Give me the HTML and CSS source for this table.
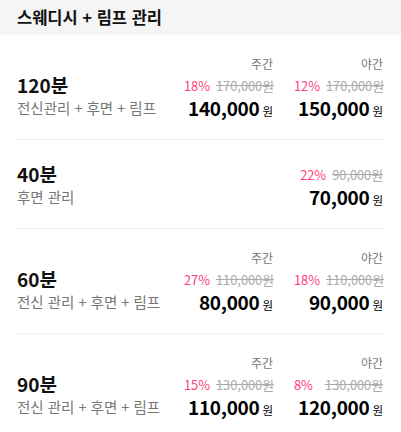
FILE: index.html
```html
<!DOCTYPE html>
<html lang="ko">
<head>
    <meta charset="UTF-8">
    <meta name="viewport" content="width=device-width, initial-scale=1.0">
    <title>스웨디시 + 림프 관리</title>
    <link rel="stylesheet" href="styles.css">
</head>
<body>
    <div class="menu">
        <h2 class="menu-title">스웨디시 + 림프 관리</h2>

        <div class="course">
            <div class="course-info">
                <div class="course-time">120분</div>
                <div class="course-desc">전신관리 + 후면 + 림프</div>
            </div>
            <div class="prices">
                <div class="price-col">
                    <div class="price-label">주간</div>
                    <div class="price-discount"><span class="rate">18%</span><span class="origin">170,000원</span></div>
                    <div class="price-final">140,000<span class="won">원</span></div>
                </div>
                <div class="price-col">
                    <div class="price-label">야간</div>
                    <div class="price-discount"><span class="rate">12%</span><span class="origin">170,000원</span></div>
                    <div class="price-final">150,000<span class="won">원</span></div>
                </div>
            </div>
        </div>

        <div class="course">
            <div class="course-info">
                <div class="course-time">40분</div>
                <div class="course-desc">후면 관리</div>
            </div>
            <div class="prices">
                <div class="price-col single">
                    <div class="price-discount"><span class="rate">22%</span><span class="origin">90,000원</span></div>
                    <div class="price-final">70,000<span class="won">원</span></div>
                </div>
            </div>
        </div>

        <div class="course">
            <div class="course-info">
                <div class="course-time">60분</div>
                <div class="course-desc">전신 관리 + 후면 + 림프</div>
            </div>
            <div class="prices">
                <div class="price-col">
                    <div class="price-label">주간</div>
                    <div class="price-discount"><span class="rate">27%</span><span class="origin">110,000원</span></div>
                    <div class="price-final">80,000<span class="won">원</span></div>
                </div>
                <div class="price-col">
                    <div class="price-label">야간</div>
                    <div class="price-discount"><span class="rate">18%</span><span class="origin">110,000원</span></div>
                    <div class="price-final">90,000<span class="won">원</span></div>
                </div>
            </div>
        </div>

        <div class="course">
            <div class="course-info">
                <div class="course-time">90분</div>
                <div class="course-desc">전신 관리 + 후면 + 림프</div>
            </div>
            <div class="prices">
                <div class="price-col">
                    <div class="price-label">주간</div>
                    <div class="price-discount"><span class="rate">15%</span><span class="origin">130,000원</span></div>
                    <div class="price-final">110,000<span class="won">원</span></div>
                </div>
                <div class="price-col">
                    <div class="price-label">야간</div>
                    <div class="price-discount"><span class="rate">8%</span><span class="origin">130,000원</span></div>
                    <div class="price-final">120,000<span class="won">원</span></div>
                </div>
            </div>
        </div>
    </div>
</body>
</html>
```

FILE: styles.css
```css
body {
    margin: 0;
    padding: 0;
    background-color: #ffffff;
    font-family: "Noto Sans CJK KR", "Noto Sans", sans-serif;
    color: #111;
}

.menu-title {
    margin: 0;
    height: 35px;
    padding-left: 17px;
    background-color: #f5f5f5;
    font-size: 16.5px;
    font-weight: 700;
    line-height: 35px;
    color: #111;
}

.course {
    display: flex;
    justify-content: space-between;
    align-items: flex-end;
    margin: 0 18px 0 16px;
    padding: 21px 0 19px;
    border-bottom: 1px solid #efefef;
    white-space: nowrap;
}

.course:last-child {
    border-bottom: none;
}

.course-info {
    padding-left: 1px;
}

.course-time {
    font-size: 19px;
    font-weight: 700;
    line-height: 22px;
}

.course-desc {
    font-size: 14.5px;
    line-height: 24px;
    color: #777;
}

.prices {
    display: flex;
    gap: 21px;
}

.price-col {
    display: flex;
    flex-direction: column;
    align-items: flex-end;
    width: 89px;
}

.price-col.single {
    width: auto;
    margin-top: 4px;
}

.price-label {
    font-size: 12px;
    line-height: 16px;
    color: #777;
    margin-bottom: 4px;
}

.price-discount {
    display: flex;
    justify-content: space-between;
    gap: 6px;
    width: 100%;
    font-size: 12.8px;
    line-height: 20px;
}

.rate {
    color: #ff3d77;
}

.origin {
    color: #aaa;
    text-decoration: line-through;
}

.price-final {
    font-size: 19px;
    font-weight: 700;
    line-height: 24px;
    letter-spacing: -0.3px;
    color: #000;
}

.won {
    font-size: 11.5px;
    font-weight: 400;
    line-height: 1;
    letter-spacing: 0;
    margin-left: 3px;
}
```
